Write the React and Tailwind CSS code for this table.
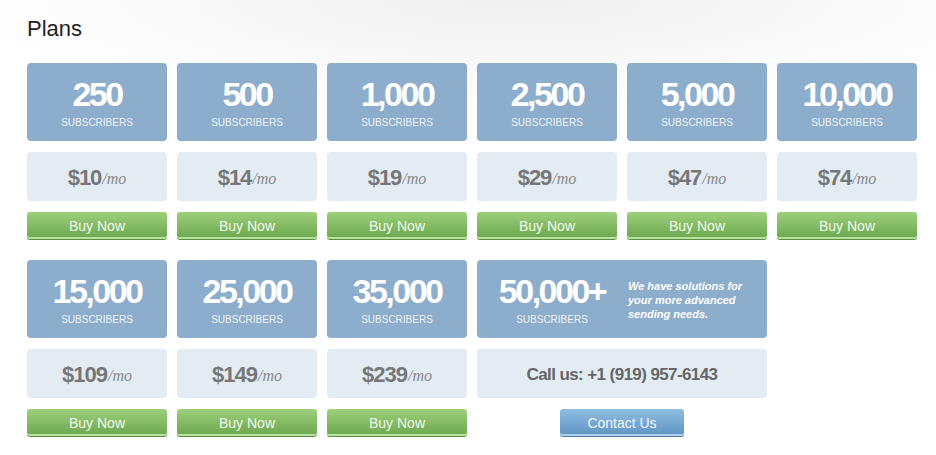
import React from "react";

const plans = [
  [
    { subs: "250", price: "$10" },
    { subs: "500", price: "$14" },
    { subs: "1,000", price: "$19" },
    { subs: "2,500", price: "$29" },
    { subs: "5,000", price: "$47" },
    { subs: "10,000", price: "$74" },
  ],
  [
    { subs: "15,000", price: "$109" },
    { subs: "25,000", price: "$149" },
    { subs: "35,000", price: "$239" },
  ],
];

const Subs = ({ value }) => (
  <div className="flex flex-col items-center">
    <div className="text-[34px] font-bold leading-[34px] tracking-[-2.5px] text-white">{value}</div>
    <div className="mt-[6px] text-[10px] leading-[12px] uppercase text-[#eef3f8]">Subscribers</div>
  </div>
);

const PlanCard = ({ subs, price }) => (
  <div className="flex w-[140px] flex-col gap-[11px]">
    <div className="flex h-[78px] items-center justify-center rounded-[4px] bg-[#8cadcb] pt-[2px]">
      <Subs value={subs} />
    </div>
    <div className="flex h-[49px] items-center justify-center rounded-[4px] bg-[#e3ebf3] pt-[2px]">
      <span className="text-[22px] font-bold tracking-[-1px] text-[#777]">{price}</span>
      <span className="ml-[1px] mt-[3px] font-[family-name:'Liberation_Serif',serif] text-[16px] font-normal italic text-[#888]">/mo</span>
    </div>
    <button className="h-[28px] rounded-[3px] border-b border-[#5b8f40] bg-gradient-to-b from-[#9ed07c] to-[#6aa64e] pt-[1px] text-[14px] text-[#f2f9ec] shadow-[inset_0_-2px_0_rgba(210,245,190,0.75)]">
      Buy Now
    </button>
  </div>
);

export default function App() {
  return (
    <div className="min-h-[455px] w-[936px] bg-[radial-gradient(ellipse_60%_25%_at_55%_0%,#f0f0f0,#ffffff)] pl-[27px] pt-[16px] font-['Liberation_Sans',Arial,sans-serif]">
      <h1 className="text-[22px] leading-[26px] text-[#222]">Plans</h1>
      <div className="mt-[21px] flex flex-col gap-[20px]">
        <div className="flex gap-[10px]">
          {plans[0].map((p) => (
            <PlanCard key={p.subs} {...p} />
          ))}
        </div>
        <div className="flex gap-[10px]">
          {plans[1].map((p) => (
            <PlanCard key={p.subs} {...p} />
          ))}
          <div className="flex w-[290px] flex-col gap-[11px]">
            <div className="flex h-[78px] items-center rounded-[4px] bg-[#8cadcb] pt-[2px]">
              <div className="w-[150px]">
                <Subs value="50,000+" />
              </div>
              <p className="ml-[1px] text-[11px] font-bold italic leading-[14px] text-white">
                We have solutions for
                <br />
                your more advanced
                <br />
                sending needs.
              </p>
            </div>
            <div className="flex h-[49px] items-center justify-center rounded-[4px] bg-[#e3ebf3] pt-[2px]">
              <span className="text-[17px] font-bold tracking-[-0.6px] text-[#666]">Call us: +1 (919) 957-6143</span>
            </div>
            <div className="flex justify-center">
              <button className="h-[28px] w-[124px] rounded-[3px] border-b border-[#4d7fab] bg-gradient-to-b from-[#8fbde0] to-[#5e94c2] pt-[1px] text-[14px] text-[#f2f7fc] shadow-[inset_0_-2px_0_rgba(200,225,245,0.75)]">
                Contact Us
              </button>
            </div>
          </div>
        </div>
      </div>
    </div>
  );
}
